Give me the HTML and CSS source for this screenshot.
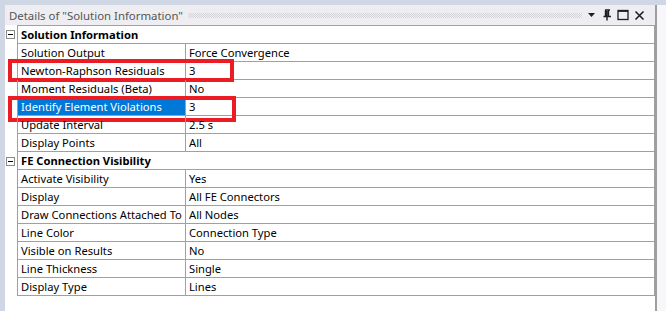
FILE: index.html
```html
<!DOCTYPE html>
<html lang="en">
<head>
    <meta charset="UTF-8">
    <meta name="viewport" content="width=device-width, initial-scale=1.0">
    <title>Details of "Solution Information"</title>
    <link rel="stylesheet" href="styles.css">
</head>
<body>

<div class="top-band"></div>
<div class="workspace">
    <div class="left-strip"></div>

    <div class="panel">
        <div class="title-bar">
            <span class="title">Details of "Solution Information"</span>
            <span class="dots"></span>
            <span class="tool-icons">
                <svg width="10" height="10" viewBox="0 0 10 10"><path d="M1 3 H8 L4.5 7 Z" fill="#1e1e1e"/></svg>
                <svg width="10" height="12" viewBox="0 0 10 12"><path d="M3 1 H8 M3.5 1 V7 M6.5 1 V7 M1.5 7.5 H9 M5 8 V11.5" stroke="#1e1e1e" stroke-width="1.4" fill="none"/><path d="M3.5 2 H5.8 V7 H3.5 Z" fill="#1e1e1e"/></svg>
                <svg width="12" height="12" viewBox="0 0 12 12"><rect x="1" y="1.5" width="10" height="9" stroke="#1e1e1e" stroke-width="1.3" fill="none"/><path d="M1 2.2 H11" stroke="#1e1e1e" stroke-width="1.4"/></svg>
                <svg width="11" height="11" viewBox="0 0 11 11"><path d="M1.5 1.5 L9.5 9.5 M9.5 1.5 L1.5 9.5" stroke="#1e1e1e" stroke-width="1.6"/></svg>
            </span>
        </div>

        <div class="details">
            <div class="line first">
                <div class="gutter"><span class="expander"></span></div>
                <div class="cells section">Solution Information</div>
            </div>
            <div class="line">
                <div class="gutter"></div>
                <div class="cells"><span class="name">Solution Output</span><span class="value">Force Convergence</span></div>
            </div>
            <div class="line">
                <div class="gutter"></div>
                <div class="cells"><span class="name">Newton-Raphson Residuals</span><span class="value">3</span></div>
                <div class="mark mark-newton"></div>
            </div>
            <div class="line">
                <div class="gutter"></div>
                <div class="cells"><span class="name">Moment Residuals (Beta)</span><span class="value">No</span></div>
            </div>
            <div class="line">
                <div class="gutter"></div>
                <div class="cells"><span class="name selected">Identify Element Violations</span><span class="value">3</span></div>
                <div class="mark mark-identify"></div>
            </div>
            <div class="line">
                <div class="gutter"></div>
                <div class="cells"><span class="name">Update Interval</span><span class="value">2.5 s</span></div>
            </div>
            <div class="line">
                <div class="gutter"></div>
                <div class="cells"><span class="name">Display Points</span><span class="value">All</span></div>
            </div>
            <div class="line">
                <div class="gutter"><span class="expander"></span></div>
                <div class="cells section">FE Connection Visibility</div>
            </div>
            <div class="line">
                <div class="gutter"></div>
                <div class="cells"><span class="name">Activate Visibility</span><span class="value">Yes</span></div>
            </div>
            <div class="line">
                <div class="gutter"></div>
                <div class="cells"><span class="name">Display</span><span class="value">All FE Connectors</span></div>
            </div>
            <div class="line">
                <div class="gutter"></div>
                <div class="cells"><span class="name">Draw Connections Attached To</span><span class="value">All Nodes</span></div>
            </div>
            <div class="line">
                <div class="gutter"></div>
                <div class="cells"><span class="name">Line Color</span><span class="value">Connection Type</span></div>
            </div>
            <div class="line">
                <div class="gutter"></div>
                <div class="cells"><span class="name">Visible on Results</span><span class="value">No</span></div>
            </div>
            <div class="line">
                <div class="gutter"></div>
                <div class="cells"><span class="name">Line Thickness</span><span class="value">Single</span></div>
            </div>
            <div class="line">
                <div class="gutter"></div>
                <div class="cells"><span class="name">Display Type</span><span class="value">Lines</span></div>
            </div>
        </div>
    </div>

    <div class="right-edge"></div>
</div>

</body>
</html>
```

FILE: styles.css
```css
body {
    margin: 0;
    width: 666px;
    height: 311px;
    overflow: hidden;
    background-color: white;
    font-family: "Noto Sans", "Open Sans", sans-serif;
    font-size: 11.2px;
    color: #000;
}

.top-band {
    height: 5px;
    background-color: #cfd6e4;
}

.workspace {
    display: flex;
    height: 306px;
}

.left-strip {
    width: 5px;
    background-color: #cfd6e4;
}

.panel {
    width: 650px;
    display: flex;
    flex-direction: column;
}

.title-bar {
    height: 20px;
    display: flex;
    align-items: center;
    background-color: #eeeef2;
    padding-left: 4px;
}

.title {
    font-size: 11.4px;
    color: #555;
    white-space: nowrap;
}

.dots {
    flex: 1;
    height: 5px;
    margin: 1px 5px 0 5px;
    background-image:
        linear-gradient(45deg, #c4c4ca 25%, transparent 25%, transparent 75%, #c4c4ca 75%),
        linear-gradient(45deg, #c4c4ca 25%, transparent 25%, transparent 75%, #c4c4ca 75%);
    background-size: 2px 2px;
    background-position: 0 0, 1px 1px;
    opacity: 0.6;
}

.tool-icons {
    display: flex;
    align-items: center;
    gap: 5px;
    padding-right: 10px;
}

.tool-icons svg {
    display: block;
}

.details {
    flex: 1;
}

.line {
    position: relative;
    display: flex;
    height: 18px;
}

.line.first {
    height: 19px;
}

.gutter {
    width: 12px;
    display: flex;
    align-items: center;
    justify-content: center;
}

.expander {
    position: relative;
    width: 7px;
    height: 7px;
    margin-left: -2px;
    border: 1px solid #8a8a8a;
    background-color: white;
}

.expander::after {
    content: "";
    position: absolute;
    left: 1px;
    top: 3px;
    width: 5px;
    height: 1px;
    background-color: #000;
}

.cells {
    flex: 1;
    display: flex;
    border-left: 1px solid #a0a0a0;
    border-right: 1px solid #a0a0a0;
    border-bottom: 1px solid #a0a0a0;
    line-height: 17px;
    white-space: nowrap;
}

.first .cells {
    border-top: 1px solid #a0a0a0;
}

.section {
    font-weight: bold;
    padding-left: 3px;
}

.name {
    width: 164px;
    padding-left: 3px;
    border-right: 1px solid #a0a0a0;
}

.value {
    padding-left: 3px;
}

.selected {
    background-color: #0078d7;
    color: white;
}

.mark {
    position: absolute;
    border: 4px solid #ec1c24;
}

.mark-newton {
    left: 3px;
    top: -3px;
    width: 218px;
    height: 15px;
}

.mark-identify {
    left: 3px;
    top: -2px;
    width: 220px;
    height: 18px;
}

.right-edge {
    width: 11px;
    background-color: #f7f7f9;
    border-left: 2px solid #9e9e9e;
    box-sizing: border-box;
}
```
